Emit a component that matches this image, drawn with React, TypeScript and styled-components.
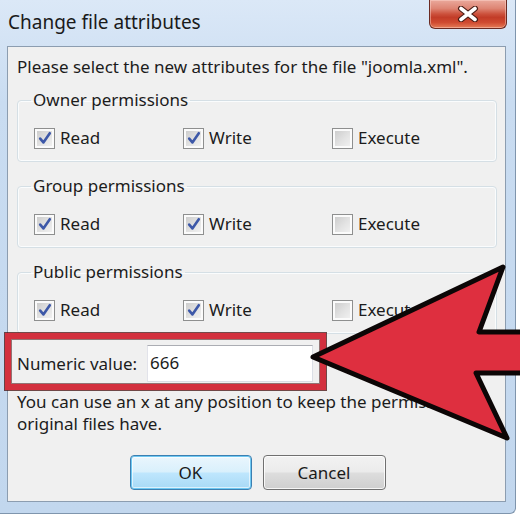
import React from "react";
import styled, { createGlobalStyle } from "styled-components";

const Global = createGlobalStyle`
  html, body { margin: 0; padding: 0; background: #ffffff; }
  body { font-family: "Noto Sans", "Open Sans", sans-serif; color: #1c1c1c; }
  * { box-sizing: border-box; }
`;

const Page = styled.div`
  position: relative;
  width: 520px;
  height: 514px;
  overflow: hidden;
`;

const Window = styled.div`
  width: 516px;
  height: 514px;
  background: linear-gradient(180deg, #dbe8f7 0%, #c9dcf1 20%, #c2d7ee 100%);
  border-right: 1px solid #7f95ad;
  border-bottom: 1px solid #7f95ad;
  border-bottom-right-radius: 6px;
  display: flex;
  flex-direction: column;
`;

const TitleBar = styled.div`
  height: 46px;
  display: flex;
  justify-content: space-between;
  align-items: flex-start;
  flex-shrink: 0;
`;

const Title = styled.div`
  padding: 9px 0 0 8px;
  font-size: 19px;
  line-height: 26px;
  color: #1a1a1a;
`;

const CloseButton = styled.div`
  width: 78px;
  height: 29px;
  margin-right: 8px;
  border: 1px solid #6a2a22;
  border-top: none;
  border-radius: 0 0 6px 6px;
  background: linear-gradient(
    180deg,
    #eaa99c 0%,
    #de8574 30%,
    #cc513c 50%,
    #c23c28 62%,
    #cf4a30 80%,
    #e57c57 100%
  );
  box-shadow: inset 0 0 0 1px rgba(255, 220, 210, 0.45);
  display: flex;
  align-items: center;
  justify-content: center;
`;

const Client = styled.div`
  margin-left: 7px;
  width: 499px;
  height: 456px;
  border: 1px solid #8c9db0;
  background: #f0f0f0;
  padding: 9px 8px 0 9px;
  display: flex;
  flex-direction: column;
`;

const Text = styled.div`
  font-size: 17px;
  line-height: 22px;
  white-space: nowrap;
`;

const HelpText = styled(Text)`
  margin-top: 9px;
`;

const Group = styled.fieldset<{ $gap: number }>`
  margin: ${(p) => p.$gap}px 0 0 0;
  padding: 16px 16px 12px 16px;
  border: 1px solid #d5dfe5;
  border-radius: 4px;
  box-shadow: inset 0 0 0 1px #fafcfd;
  min-width: 0;
`;

const Legend = styled.legend`
  margin-left: -3px;
  padding: 0 2px;
  font-size: 17px;
  line-height: 22px;
`;

const CheckRow = styled.div`
  display: grid;
  grid-template-columns: 149px 149px auto;
  height: 22px;
  align-items: center;
`;

const CheckItem = styled.label`
  display: flex;
  align-items: center;
  gap: 5px;
  font-size: 17px;
  line-height: 22px;
`;

const Box = styled.span`
  width: 21px;
  height: 21px;
  flex-shrink: 0;
  border: 1px solid #8e8f8f;
  background: linear-gradient(135deg, #c8c8c8 0%, #e3e3e3 55%, #f4f4f4 100%);
  box-shadow: inset 0 0 0 2px #fbfbfb;
  display: flex;
  align-items: center;
  justify-content: center;
`;

const NumericRow = styled.div`
  position: relative;
  margin-top: 11px;
  display: flex;
  align-items: center;
  height: 37px;
`;

const NumericLabel = styled.span`
  width: 130px;
  font-size: 17px;
  line-height: 22px;
`;

const Input = styled.div`
  width: 166px;
  height: 37px;
  background: #ffffff;
  border: 1px solid #dbdfe6;
  border-top-color: #abadb3;
  border-left-color: #e2e3ea;
  padding-left: 2px;
  font-size: 17px;
  line-height: 33px;
`;

const Highlight = styled.div`
  position: absolute;
  left: -12px;
  top: -12px;
  width: 321px;
  height: 57px;
  border: 6px solid #d3303e;
  box-shadow: 0 0 0 1px rgba(70, 15, 15, 0.75),
    inset 0 0 0 1px rgba(70, 15, 15, 0.55);
  pointer-events: none;
`;

const ButtonRow = styled.div`
  margin-top: 20px;
  display: flex;
  justify-content: center;
  gap: 11px;
  padding-left: 1px;
`;

const Button = styled.div<{ $primary?: boolean }>`
  width: ${(p) => (p.$primary ? 122 : 123)}px;
  height: 35px;
  border-radius: 4px;
  display: flex;
  align-items: center;
  justify-content: center;
  font-size: 17px;
  color: #1a1a1a;
  border: 1px solid ${(p) => (p.$primary ? "#3c7fb1" : "#707070")};
  background: ${(p) =>
    p.$primary
      ? "linear-gradient(180deg, #eaf6fd 0%, #d9f0fc 48%, #bee6fd 52%, #a7d9f5 100%)"
      : "linear-gradient(180deg, #f2f2f2 0%, #ebebeb 48%, #dddddd 52%, #cfcfcf 100%)"};
  box-shadow: ${(p) =>
    p.$primary
      ? "inset 0 0 0 1px #6ec8f2, inset 0 0 0 2px rgba(255,255,255,0.6)"
      : "inset 0 0 0 1px rgba(255,255,255,0.8)"};
`;

const Overlay = styled.svg`
  position: absolute;
  left: 0;
  top: 0;
  pointer-events: none;
`;

const Check: React.FC = () => (
  <svg width="14" height="14" viewBox="0 0 14 14">
    <path
      d="M2.2 7.6 L5.4 11.4 L11.8 2.2"
      fill="none"
      stroke="#3d58a8"
      strokeWidth="2.6"
      strokeLinecap="round"
      strokeLinejoin="round"
    />
  </svg>
);

const CheckBox: React.FC<{ label: string; checked: boolean }> = ({ label, checked }) => (
  <CheckItem>
    <Box>{checked && <Check />}</Box>
    {label}
  </CheckItem>
);

const PermGroup: React.FC<{ title: string; gap: number }> = ({ title, gap }) => (
  <Group $gap={gap}>
    <Legend>{title}</Legend>
    <CheckRow>
      <CheckBox label="Read" checked />
      <CheckBox label="Write" checked />
      <CheckBox label="Execute" checked={false} />
    </CheckRow>
  </Group>
);

export default function App() {
  return (
    <>
      <Global />
      <Page>
        <Window>
          <TitleBar>
            <Title>Change file attributes</Title>
            <CloseButton>
              <svg width="24" height="16" viewBox="0 0 24 16">
                <path
                  d="M5 2.5 L19 13.5 M19 2.5 L5 13.5"
                  stroke="#4a1c14"
                  strokeWidth="6"
                  strokeLinecap="round"
                />
                <path
                  d="M5 2.5 L19 13.5 M19 2.5 L5 13.5"
                  stroke="#ffffff"
                  strokeWidth="3.6"
                  strokeLinecap="round"
                />
              </svg>
            </CloseButton>
          </TitleBar>
          <Client>
            <Text>Please select the new attributes for the file "joomla.xml".</Text>
            <PermGroup title="Owner permissions" gap={11} />
            <PermGroup title="Group permissions" gap={13} />
            <PermGroup title="Public permissions" gap={13} />
            <NumericRow>
              <NumericLabel>Numeric value:</NumericLabel>
              <Input>666</Input>
              <Highlight />
            </NumericRow>
            <HelpText>
              You can use an x at any position to keep the permission the
              <br />
              original files have.
            </HelpText>
            <ButtonRow>
              <Button $primary>OK</Button>
              <Button>Cancel</Button>
            </ButtonRow>
          </Client>
        </Window>
        <Overlay width="520" height="514" viewBox="0 0 520 514">
          <polygon
            points="313,357 503,267 479,332 530,332 530,373 476,373 507,438"
            fill="#de2f3f"
            stroke="#0c0606"
            strokeWidth="5"
            strokeLinejoin="round"
          />
        </Overlay>
      </Page>
    </>
  );
}
